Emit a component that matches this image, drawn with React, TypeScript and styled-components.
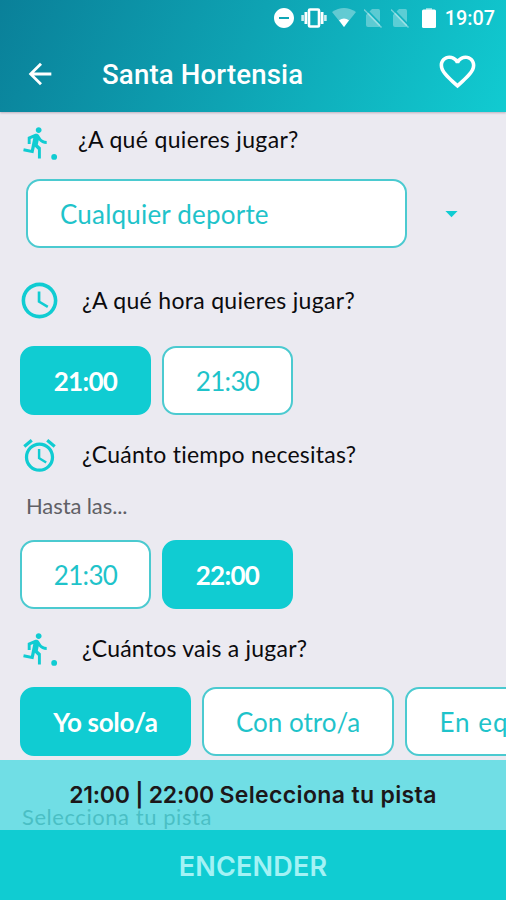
import React from "react";
import styled, { createGlobalStyle, css } from "styled-components";
import {
  MdAccessTime,
  MdAlarm,
  MdArrowBack,
  MdArrowDropDown,
  MdDoNotDisturbOn,
  MdFavoriteBorder,
} from "react-icons/md";

const TEAL = "#10ccd2";

const GlobalStyle = createGlobalStyle`
  * { box-sizing: border-box; }
  body { margin: 0; background: #ebeaf1; }
  button { font: inherit; margin: 0; padding: 0; border: 0; background: none; color: inherit; }
  svg { display: block; flex: none; }
`;

const Screen = styled.div`
  position: relative;
  display: flex;
  flex-direction: column;
  width: 506px;
  height: 900px;
  overflow: hidden;
  background: #ebeaf1;
  font-family: Lato, sans-serif;
  font-variant-ligatures: none;
`;

const Header = styled.header`
  flex: none;
  height: 112px;
  color: #fff;
  font-family: Roboto, sans-serif;
  font-weight: 500;
  background: linear-gradient(115deg, #0a8099 0%, #0ea3b3 48%, #11cbd1 100%);
  box-shadow: 0 1px 2px rgba(120, 90, 110, 0.4);
  z-index: 1;
`;

const StatusBar = styled.div`
  display: flex;
  justify-content: flex-end;
  align-items: center;
  height: 36px;
  padding-right: 11px;
`;

const StatusIcon = styled.span<{ $gap: number }>`
  margin-right: ${(p) => p.$gap}px;
`;

const Clock = styled.span`
  padding-top: 1px;
  font-size: 19.8px;
  line-height: 24px;
`;

const TitleBar = styled.div`
  display: flex;
  align-items: center;
  height: 76px;
  padding: 0 27px 0 23px;
`;

const Title = styled.h1`
  flex: 1;
  margin: 0 0 0 45px;
  padding-top: 2px;
  font-size: 27.6px;
  font-weight: 500;
  line-height: 32px;
  letter-spacing: 0.15px;
`;

const HeartButton = styled.button`
  padding: 0 0 6px 0;
`;

const Content = styled.main`
  flex: 1;
  min-height: 0;
  overflow: hidden;
  padding-left: 20px;
`;

const Question = styled.div<{ $top: number; $bottom: number }>`
  display: flex;
  align-items: center;
  height: 36px;
  margin: ${(p) => p.$top}px 0 ${(p) => p.$bottom}px;
`;

const IconSlot = styled.span<{ $width: number }>`
  display: flex;
  justify-content: center;
  width: ${(p) => p.$width}px;
  color: ${TEAL};
`;

const Label = styled.span<{ $left: number; $spacing: number; $raise?: number }>`
  margin-left: ${(p) => p.$left}px;
  padding-bottom: ${(p) => p.$raise ?? 0}px;
  color: #0b0b0e;
  font-size: 23px;
  line-height: 32px;
  letter-spacing: ${(p) => p.$spacing}px;
  white-space: nowrap;
`;

const SelectRow = styled.div`
  display: flex;
  align-items: center;
  color: ${TEAL};
`;

const box = css`
  height: 69px;
  border: 2px solid #4bcad0;
  border-radius: 14px;
  background: #fff;
  color: #1fc3ca;
  font-size: 26px;
  white-space: nowrap;
`;

const SelectBox = styled.div`
  ${box}
  display: flex;
  align-items: center;
  width: 381px;
  margin: 0 30px 0 6px;
  padding-left: 32px;
  letter-spacing: 0.2px;
`;

const Options = styled.div`
  display: flex;
  gap: 11px;
`;

const Option = styled.button<{ $width: number; $selected?: boolean; $spacing?: number }>`
  ${box}
  flex: none;
  width: ${(p) => p.$width}px;
  letter-spacing: ${(p) => p.$spacing ?? 0}px;
  ${(p) =>
    p.$selected &&
    css`
      border-color: ${TEAL};
      background: ${TEAL};
      color: #fff;
      font-weight: 700;
    `}
`;

const Hint = styled.p<{ $top: number; $left: number; $spacing: number; $dark?: boolean }>`
  margin: ${(p) => p.$top}px 0 0 ${(p) => p.$left}px;
  color: ${(p) => (p.$dark ? "#1c3c40" : "#606065")};
  font-size: 22px;
  font-weight: 400;
  line-height: 26px;
  letter-spacing: ${(p) => p.$spacing}px;
`;

const TimeOptions = styled(Options)`
  margin-top: 21px;
`;

const Summary = styled.div`
  position: absolute;
  left: 0;
  right: 0;
  bottom: 70px;
  height: 70px;
  display: flex;
  align-items: center;
  justify-content: center;
  background: rgba(84, 220, 226, 0.82);
  color: #1c1719;
  font-family: Inter, sans-serif;
  font-size: 23px;
  font-weight: 600;
  white-space: pre;
  letter-spacing: 0.36px;
`;

const Range = styled.span`
  letter-spacing: -0.25px;
`;

const Action = styled.button`
  && {
    flex: none;
    height: 70px;
    padding-top: 3px;
    background: ${TEAL};
    color: #a3f2f5;
    font-family: Inter, sans-serif;
    font-size: 27px;
    font-weight: 600;
    letter-spacing: 0.2px;
  }
`;

const Runner = () => (
  <svg width="40" height="35" viewBox="0 0 27.43 24" fill="currentColor">
    <path d="M13.49 5.48c1.1 0 2-.9 2-2s-.9-2-2-2-2 .9-2 2 .9 2 2 2zm-3.6 13.9l1-4.4 2.1 2v6h2v-7.5l-2.1-2 .6-3c1.3 1.5 3.3 2.5 5.5 2.5v-2c-1.9 0-3.5-1-4.3-2.4l-1-1.6c-.4-.6-1-1-1.7-1-.3 0-.5.1-.8.1l-5.2 2.2v4.7h2v-3.4l1.8-.7-1.6 8.1-4.9-1-.4 2 7 1.4z" />
    <circle cx="24.1" cy="21.9" r="2" />
  </svg>
);

const Vibration = () => (
  <svg width="26" height="20" viewBox="0 0 26 20" fill="none" stroke="#fff">
    <rect x="8" y="1.5" width="10" height="17" rx="1" strokeWidth="2.6" />
    <path d="M4.9 4V16M21.1 4V16" strokeWidth="2.8" />
    <path d="M1.6 7V13M24.4 7V13" strokeWidth="2.6" opacity=".8" />
  </svg>
);

const Wifi = () => (
  <svg width="24" height="20" viewBox="0 0 24 20" fill="#fff">
    <path d="M0 4Q12-4 24 4L12 19Z" opacity=".35" />
    <path d="M7 12.2Q12 9 17 12.2L12 19Z" />
  </svg>
);

const NoSim = () => (
  <svg width="19" height="20" viewBox="0 0 19 20">
    <path d="M8 1H14.5Q16 1 16 2.5V17.5Q16 19 14.5 19H4Q2 19 2 17V7Z" fill="#fff" opacity=".32" />
    <path d="M1.5 .5L18.5 18" stroke="#11b2bf" strokeWidth="1.6" />
    <path d="M0 1.5L17.5 19.5" stroke="#fff" strokeWidth="1.5" opacity=".4" />
  </svg>
);

const Battery = () => (
  <svg width="14" height="20" viewBox="0 0 14 20" fill="#fff">
    <path d="M4 0H10V2H4Z" opacity=".5" />
    <rect y="1.5" width="14" height="18.5" rx="1.5" />
  </svg>
);

export default function App() {
  return (
    <>
      <GlobalStyle />
      <Screen>
        <Header>
          <StatusBar>
            <StatusIcon $gap={5}><MdDoNotDisturbOn size={24} /></StatusIcon>
            <StatusIcon $gap={5}><Vibration /></StatusIcon>
            <StatusIcon $gap={8}><Wifi /></StatusIcon>
            <StatusIcon $gap={8}><NoSim /></StatusIcon>
            <StatusIcon $gap={12}><NoSim /></StatusIcon>
            <StatusIcon $gap={9}><Battery /></StatusIcon>
            <Clock>19:07</Clock>
          </StatusBar>
          <TitleBar>
            <button aria-label="Volver"><MdArrowBack size={34} /></button>
            <Title>Santa Hortensia</Title>
            <HeartButton aria-label="Favorito"><MdFavoriteBorder size={43} /></HeartButton>
          </TitleBar>
        </Header>

        <Content>
          <Question $top={12} $bottom={19}>
            <IconSlot $width={38}><Runner /></IconSlot>
            <Label $left={20} $spacing={0.33} $raise={7}>¿A qué quieres jugar?</Label>
          </Question>
          <SelectRow>
            <SelectBox>Cualquier deporte</SelectBox>
            <MdArrowDropDown size={29} />
          </SelectRow>

          <Question $top={34} $bottom={28}>
            <IconSlot $width={38}><MdAccessTime size={43} /></IconSlot>
            <Label $left={24} $spacing={0.3}>¿A qué hora quieres jugar?</Label>
          </Question>
          <Options>
            <Option $width={131} $selected $spacing={-0.7}>21:00</Option>
            <Option $width={131} $spacing={-0.7}>21:30</Option>
          </Options>

          <Question $top={22} $bottom={0}>
            <IconSlot $width={38}><MdAlarm size={39} /></IconSlot>
            <Label $left={24} $spacing={0.24} $raise={2}>¿Cuánto tiempo necesitas?</Label>
          </Question>
          <Hint $top={20} $left={6} $spacing={-0.1}>Hasta las...</Hint>
          <TimeOptions>
            <Option $width={131} $spacing={-0.7}>21:30</Option>
            <Option $width={131} $selected $spacing={-0.7}>22:00</Option>
          </TimeOptions>

          <Question $top={21} $bottom={21}>
            <IconSlot $width={38}><Runner /></IconSlot>
            <Label $left={24} $spacing={0.23}>¿Cuántos vais a jugar?</Label>
          </Question>
          <Options>
            <Option $width={171} $selected $spacing={-0.3}>Yo solo/a</Option>
            <Option $width={192}>Con otro/a</Option>
            <Option $width={192} $spacing={1}>En equipo</Option>
          </Options>
          <Hint $top={48} $left={2} $spacing={0.55} $dark>Selecciona tu pista</Hint>
        </Content>

        <Summary><Range>21:00 | 22:00 </Range>Selecciona tu pista</Summary>
        <Action>ENCENDER</Action>
      </Screen>
    </>
  );
}
